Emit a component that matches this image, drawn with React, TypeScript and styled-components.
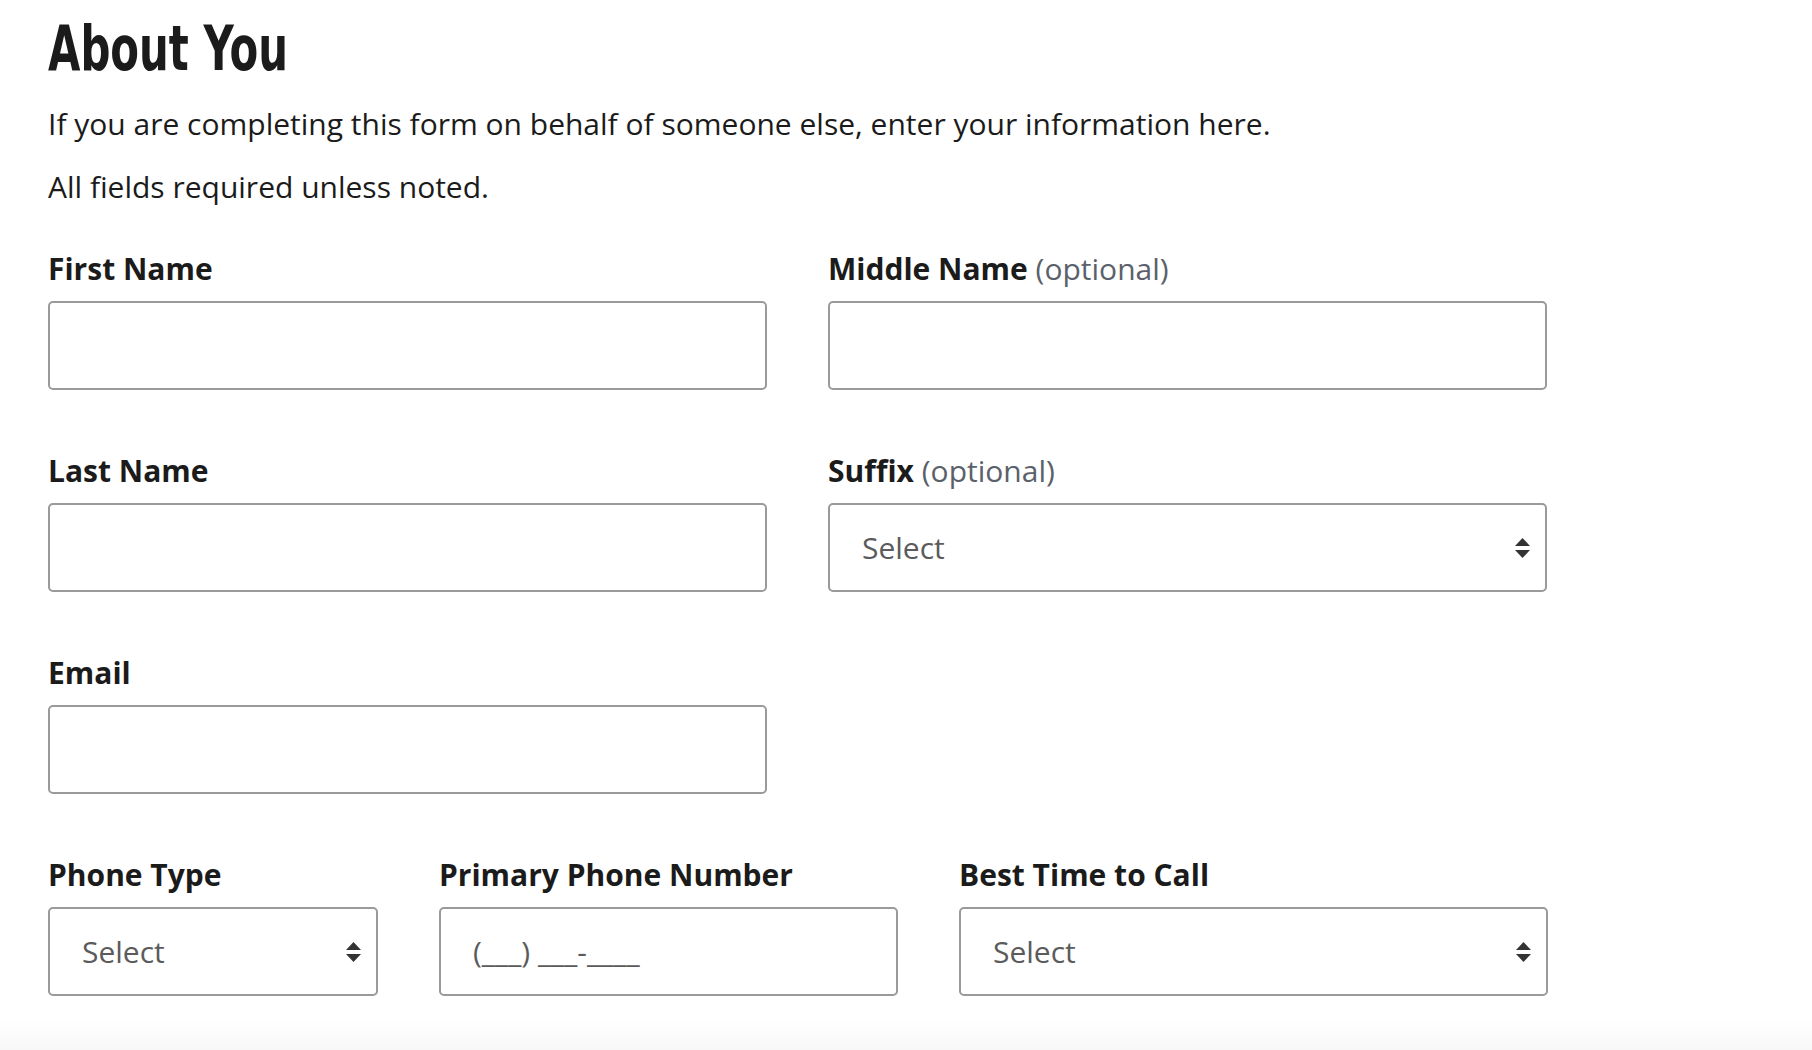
import styled, { createGlobalStyle } from "styled-components";

const GlobalStyle = createGlobalStyle`
  html, body {
    margin: 0;
    padding: 0;
    background: #fff;
  }
  body {
    font-family: "Open Sans", "Liberation Sans", sans-serif;
    color: #1b1b1b;
    min-height: 1050px;
    background: linear-gradient(to bottom, #fff 0, #fff 1018px, #f8f8f8 1050px);
  }
`;

const Page = styled.main`
  padding: 13px 48px 40px;
  width: 1500px;
`;

const Title = styled.h1`
  margin: 0;
  display: inline-block;
  font-family: "Liberation Sans Narrow", "DejaVu Sans Condensed", "Liberation Sans", sans-serif;
  font-weight: 700;
  font-size: 62px;
  line-height: 72px;
  color: #1b1b1b;
  transform: scaleX(0.75);
  transform-origin: left center;
`;

const Intro = styled.p<{ $last?: boolean }>`
  margin: ${(p) => (p.$last ? "0 0 42px" : "19px 0 23px")};
  font-size: 30px;
  line-height: 40px;
`;

const Grid = styled.div<{ $cols: string }>`
  display: grid;
  grid-template-columns: ${(p) => p.$cols};
  column-gap: 61px;
  row-gap: 61px;
  margin-bottom: 61px;
`;

const Field = styled.div`
  display: flex;
  flex-direction: column;
`;

const Label = styled.label`
  font-size: 30px;
  line-height: 40px;
  font-weight: 700;
  margin-bottom: 12px;
  color: #1b1b1b;
`;

const Optional = styled.span`
  font-weight: 400;
  color: #5b616b;
`;

const Box = styled.div`
  box-sizing: border-box;
  height: 89px;
  border: 2px solid #9a9a9a;
  border-radius: 5px;
  background: #fff;
  display: flex;
  align-items: center;
  padding: 0 15px 0 32px;
  font-size: 30px;
  color: #5b5b5b;
`;

const Placeholder = styled.span`
  flex: 1;
`;

function Arrows() {
  return (
    <svg width="15" height="20" viewBox="0 0 15 20">
      <path d="M7.5 0 L15 8 L0 8 Z" fill="#333" />
      <path d="M7.5 20 L15 12 L0 12 Z" fill="#333" />
    </svg>
  );
}

function TextField({ label, optional }: { label: string; optional?: boolean }) {
  return (
    <Field>
      <Label>
        {label}
        {optional && <Optional> (optional)</Optional>}
      </Label>
      <Box />
    </Field>
  );
}

function SelectField({ label, optional }: { label: string; optional?: boolean }) {
  return (
    <Field>
      <Label>
        {label}
        {optional && <Optional> (optional)</Optional>}
      </Label>
      <Box>
        <Placeholder>Select</Placeholder>
        <Arrows />
      </Box>
    </Field>
  );
}

export default function App() {
  return (
    <>
      <GlobalStyle />
      <Page>
        <Title>About You</Title>
        <Intro>
          If you are completing this form on behalf of someone else, enter your
          information here.
        </Intro>
        <Intro $last>All fields required unless noted.</Intro>
        <Grid $cols="719px 719px">
          <TextField label="First Name" />
          <TextField label="Middle Name" optional />
          <TextField label="Last Name" />
          <SelectField label="Suffix" optional />
          <TextField label="Email" />
        </Grid>
        <Grid $cols="330px 459px 589px">
          <SelectField label="Phone Type" />
          <Field>
            <Label>Primary Phone Number</Label>
            <Box>
              <Placeholder>(___) ___-____</Placeholder>
            </Box>
          </Field>
          <SelectField label="Best Time to Call" />
        </Grid>
      </Page>
    </>
  );
}
